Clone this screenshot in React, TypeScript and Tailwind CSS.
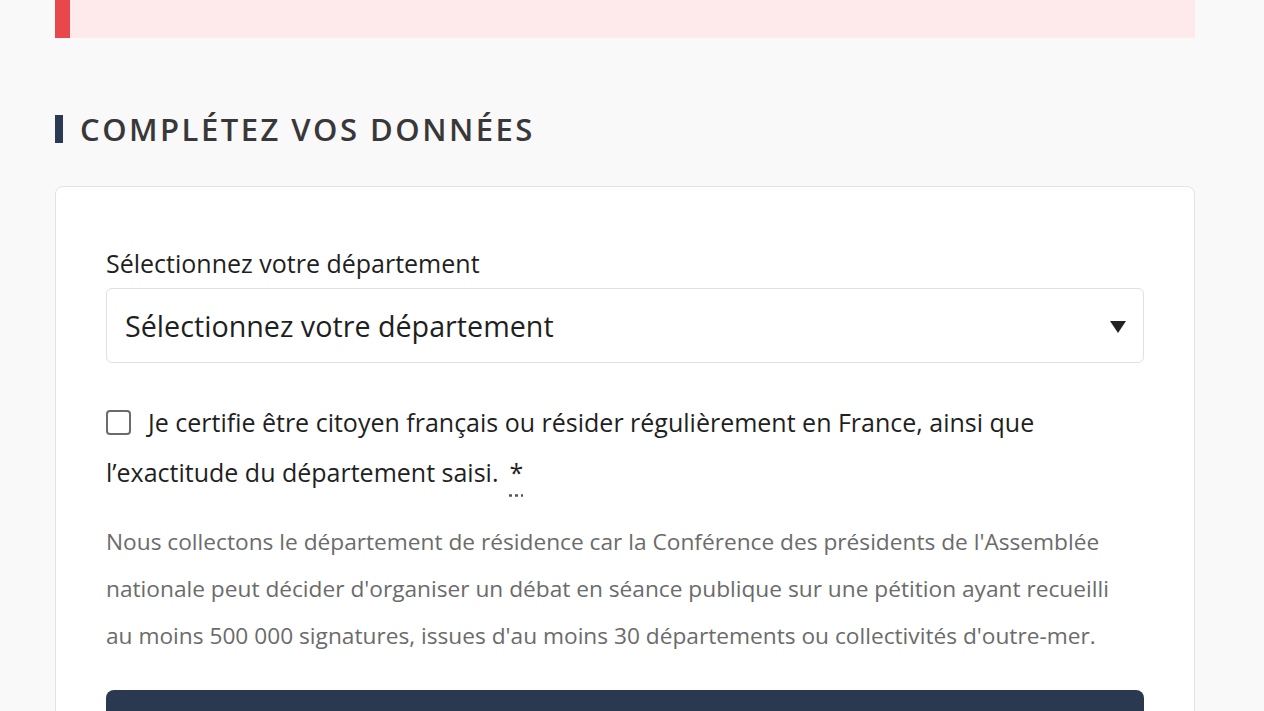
import { useState } from "react"

const font = { fontFamily: '"Open Sans", "Noto Sans", sans-serif' }

export default function App() {
  const [certified, setCertified] = useState(false)
  const [dept, setDept] = useState("")

  return (
    <div className="min-h-[711px] bg-[#f9f9f9] text-[#1f1f1f]" style={font}>
      <div className="ml-[55px] w-[1140px]">
        <div className="h-[38px] border-l-[15px] border-[#e8474c] bg-[#feeaea]" />

        <h2 className="mt-[76px] flex items-center gap-[17px] text-[31px] font-semibold uppercase leading-[30px] tracking-[0.08em] text-[#383838]">
          <span className="h-[28px] w-[8px] bg-[#2b3a52]" />
          Complétez vos données
        </h2>

        <div className="mt-[42px] rounded-lg border border-[#e3e3e3] bg-white px-[50px] pt-[58px]">
          <label htmlFor="dept" className="block text-[25px] leading-[36px]">
            Sélectionnez votre département
          </label>
          <div className="relative mt-[7px]">
            <select
              id="dept"
              value={dept}
              onChange={(e) => setDept(e.target.value)}
              className="h-[75px] w-full appearance-none rounded-md border border-[#e0e0e0] bg-white px-[18px] text-[28.7px] text-[#1f1f1f] outline-none"
              style={font}
            >
              <option value="">Sélectionnez votre département</option>
              <option value="75">75 - Paris</option>
            </select>
            <svg
              className="pointer-events-none absolute right-[18px] top-[33px] h-[12px] w-[16px]"
              viewBox="0 0 16 12"
            >
              <path d="M0 0h16L8 12z" fill="#222" />
            </svg>
          </div>

          <p className="mt-[34px] text-[25px] leading-[50px]">
            <input
              type="checkbox"
              checked={certified}
              onChange={(e) => setCertified(e.target.checked)}
              className="mr-[17px] inline-block h-[25px] w-[25px] translate-y-[3px] appearance-none rounded-[4px] border-2 border-[#6b6b6b] bg-white align-baseline"
            />
            Je certifie être citoyen français ou résider régulièrement en France, ainsi que
            l’exactitude du département saisi.
            <abbr title="obligatoire" className="ml-[11px] no-underline">
              <span className="underline decoration-dotted decoration-[#555] underline-offset-[12px]">*</span>
            </abbr>
          </p>

          <p className="mt-[21px] pr-[28px] text-[22.7px] leading-[47px] text-[#6b6b6b]">
            Nous collectons le département de résidence car la Conférence des présidents de l'Assemblée
            nationale peut décider d'organiser un débat en séance publique sur une pétition ayant recueilli
            au moins 500 000 signatures, issues d'au moins 30 départements ou collectivités d'outre-mer.
          </p>

          <button className="mt-[31px] h-[70px] w-full rounded-t-lg bg-[#2b3950]" />
        </div>
      </div>
    </div>
  )
}
